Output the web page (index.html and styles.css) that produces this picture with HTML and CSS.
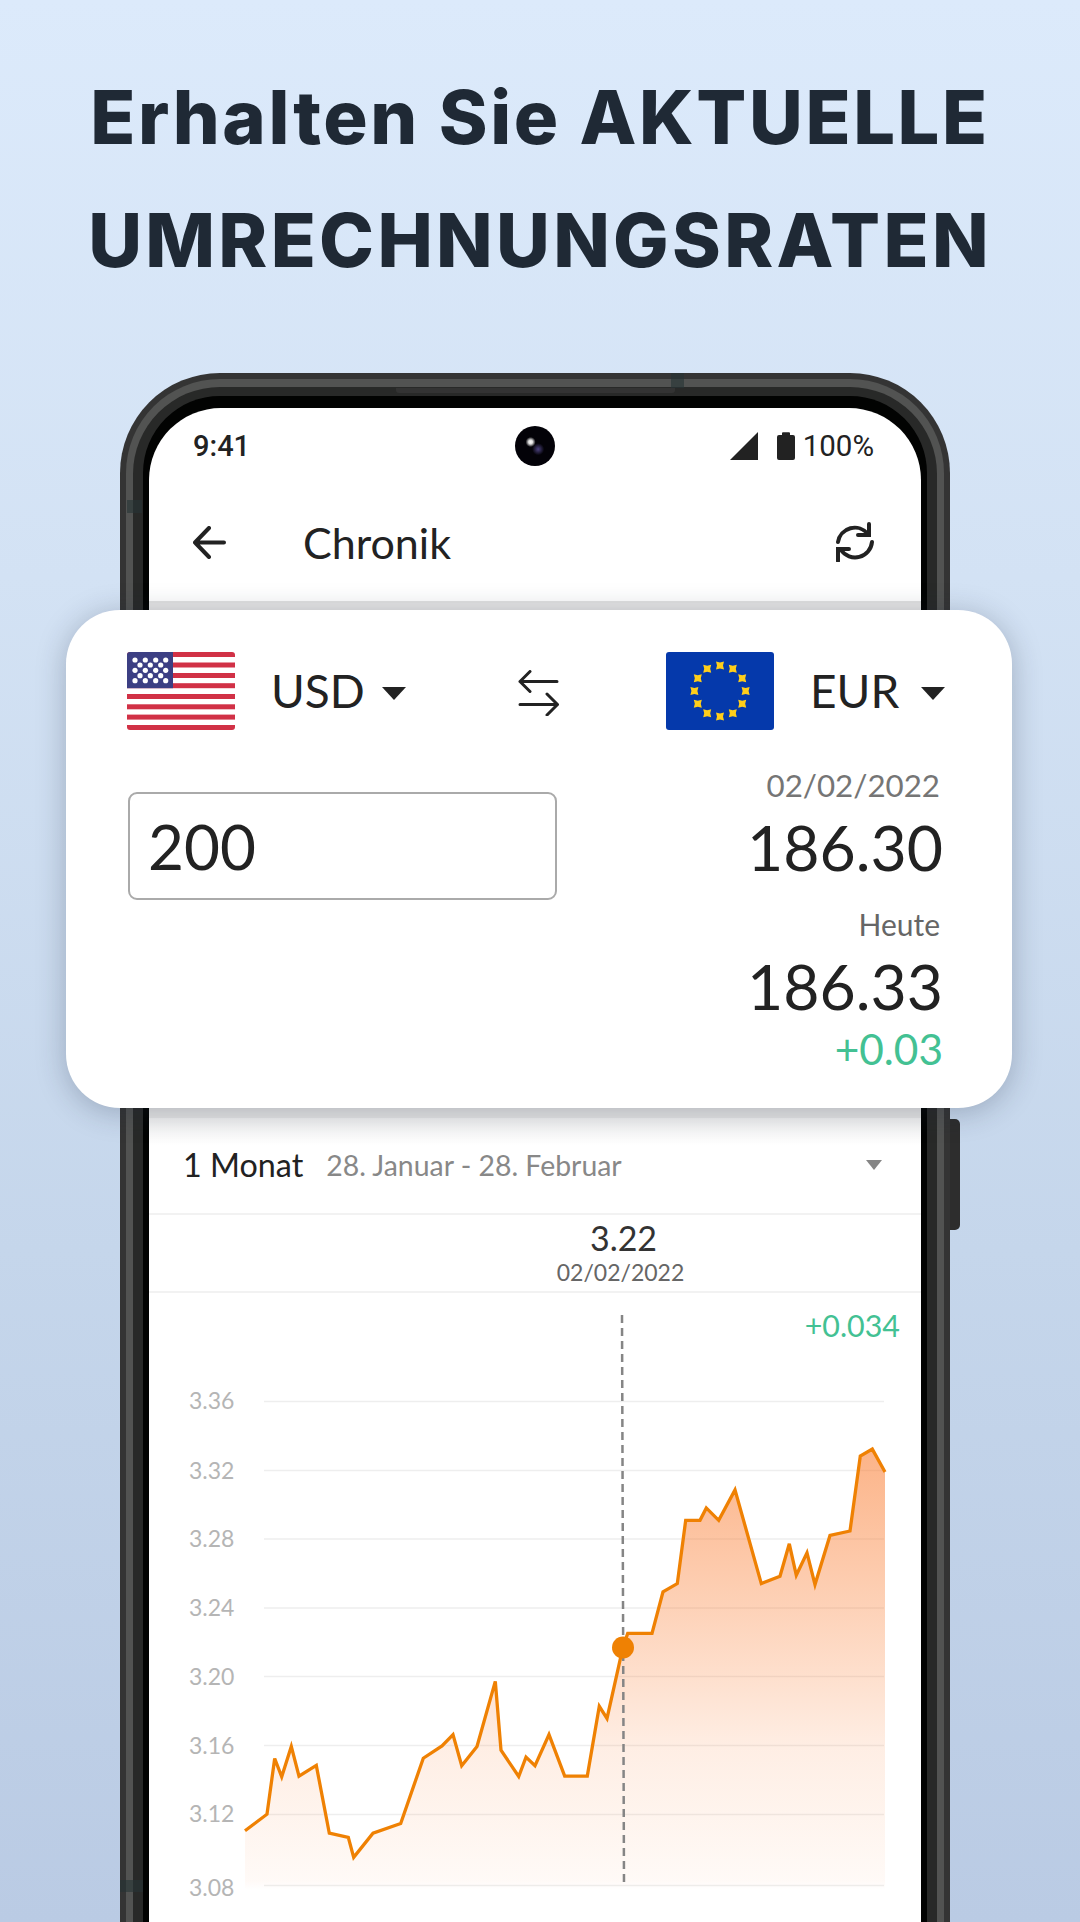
FILE: index.html
```html
<!DOCTYPE html>
<html lang="de">
<head>
<meta charset="utf-8">
<title>Chronik</title>
<link rel="stylesheet" href="styles.css">
</head>
<body>
<div class="page">
  <h1 class="headline"><span class="line line-a">Erhalten Sie AKTUELLE</span><span class="line line-b">UMRECHNUNGSRATEN</span></h1>

  <div class="phone">
    <span class="mark mark-top"></span>
    <span class="mark mark-left"></span>
    <span class="mark mark-left-low"></span>
    <span class="speaker"></span>
    <span class="side-button"></span>
    <div class="band">
      <div class="inner">
        <div class="bezel">
          <div class="screen">
            <div class="status">
              <span class="time">9:41</span>
              <span class="camera"></span>
              <div class="status-right">
                <svg class="signal" viewBox="0 0 28 28"><polygon points="28,0 28,28 0,28"/></svg>
                <svg class="battery" viewBox="0 0 18 28"><path d="M5 1.2a1 1 0 0 1 1-1h6a1 1 0 0 1 1 1V3h3a2 2 0 0 1 2 2v21a2 2 0 0 1-2 2H2a2 2 0 0 1-2-2V5a2 2 0 0 1 2-2h3z"/></svg>
                <span class="percent">100%</span>
              </div>
            </div>
            <div class="appbar">
              <svg class="back" viewBox="0 0 33 33"><path d="M31 16.5H2M16 2 2 16.5 16 31"/></svg>
              <span class="title">Chronik</span>
              <svg class="refresh" viewBox="0 0 40 40"><path d="M3 20A17 17 0 0 1 33 12M34 2V13H23M37 20A17 17 0 0 1 6 28M3 39V27H14"/></svg>
            </div>
            <div class="under-card"></div>
            <div class="period">
              <span class="period-name">1 Monat</span>
              <span class="period-range">28. Januar - 28. Februar</span>
              <span class="period-caret"></span>
            </div>
            <div class="point">
              <span class="point-value">3.22</span>
              <span class="point-date">02/02/2022</span>
            </div>
            <svg class="chart" viewBox="149 1293 773 760">
              <defs>
                <linearGradient id="area" x1="0" y1="1450" x2="0" y2="1890" gradientUnits="userSpaceOnUse">
                  <stop offset="0" stop-color="#fa7d32" stop-opacity=".58"/>
                  <stop offset=".34" stop-color="#fa7d32" stop-opacity=".36"/>
                  <stop offset=".68" stop-color="#fa7d32" stop-opacity=".13"/>
                  <stop offset=".98" stop-color="#fa7d32" stop-opacity=".04"/>
                  <stop offset="1" stop-color="#fa7d32" stop-opacity="0"/>
                </linearGradient>
              </defs>
              <g class="grid">
                <line x1="264" x2="884" y1="1401.5" y2="1401.5"/>
                <line x1="264" x2="884" y1="1470.5" y2="1470.5"/>
                <line x1="264" x2="884" y1="1539" y2="1539"/>
                <line x1="264" x2="884" y1="1608" y2="1608"/>
                <line x1="264" x2="884" y1="1676.5" y2="1676.5"/>
                <line x1="264" x2="884" y1="1745.5" y2="1745.5"/>
                <line x1="264" x2="884" y1="1814.5" y2="1814.5"/>
                <line x1="264" x2="884" y1="1885.5" y2="1885.5"/>
              </g>
              <g class="axis">
                <text x="189" y="1409">3.36</text>
                <text x="189" y="1479">3.32</text>
                <text x="189" y="1547">3.28</text>
                <text x="189" y="1616">3.24</text>
                <text x="189" y="1685">3.20</text>
                <text x="189" y="1754">3.16</text>
                <text x="189" y="1822">3.12</text>
                <text x="189" y="1896">3.08</text>
              </g>
              <text class="delta-small" x="900" y="1337">+0.034</text>
              <polygon class="area" points="245,1890 245,1830.7 267,1814.2 274.7,1758.5 281.7,1776.8 291.3,1746.4 299,1776.1 316.3,1765.4 329.3,1833.2 348.3,1837.3 353.7,1857.4 373,1833.2 400.7,1823.5 423.3,1758.2 442,1746 453,1734.6 461.7,1765.8 477,1746.4 495.3,1681.4 501,1750.2 518.7,1776.5 526,1757.1 535,1765.8 549,1734.6 564.7,1776.1 587.3,1776.1 599.3,1706.3 607,1718.4 623,1647 627.7,1633.4 652,1633.4 663,1591.9 677.3,1583.6 685.7,1520.3 700,1520.3 706.3,1507.9 718.7,1520.3 735,1489.9 761.3,1583.6 780,1576.3 789.3,1543.8 796.3,1575.3 807,1552.8 815,1584.6 830,1535.5 850,1531 860.3,1456 872.3,1449.1 885,1472 885,1890"/>
              <line class="cursor" x1="622" y1="1315" x2="624" y2="1885"/>
              <polyline class="trend" points="245,1830.7 267,1814.2 274.7,1758.5 281.7,1776.8 291.3,1746.4 299,1776.1 316.3,1765.4 329.3,1833.2 348.3,1837.3 353.7,1857.4 373,1833.2 400.7,1823.5 423.3,1758.2 442,1746 453,1734.6 461.7,1765.8 477,1746.4 495.3,1681.4 501,1750.2 518.7,1776.5 526,1757.1 535,1765.8 549,1734.6 564.7,1776.1 587.3,1776.1 599.3,1706.3 607,1718.4 623,1647 627.7,1633.4 652,1633.4 663,1591.9 677.3,1583.6 685.7,1520.3 700,1520.3 706.3,1507.9 718.7,1520.3 735,1489.9 761.3,1583.6 780,1576.3 789.3,1543.8 796.3,1575.3 807,1552.8 815,1584.6 830,1535.5 850,1531 860.3,1456 872.3,1449.1 885,1472"/>
              <circle class="dot" cx="623" cy="1647.500" r="11"/>
            </svg>
          </div>
        </div>
      </div>
    </div>
  </div>

  <section class="card">
    <div class="pairs">
      <div class="currency">
        <svg class="flag" viewBox="0 0 108 78">
          <rect width="108" height="78" fill="#fff"/>
          <g fill="#d13146">
            <rect y="0" width="108" height="5"/>
            <rect y="10.5" width="108" height="5"/>
            <rect y="21" width="108" height="5"/>
            <rect y="31.2" width="108" height="5"/>
            <rect y="42" width="108" height="5"/>
            <rect y="52.3" width="108" height="5"/>
            <rect y="62.6" width="108" height="5"/>
            <rect y="73" width="108" height="5"/>
          </g>
          <rect width="46" height="36.2" fill="#3c3f83"/>
          <g fill="#fff">
            <circle cx="8" cy="8" r="2.6"/><circle cx="18.3" cy="8" r="2.6"/><circle cx="28.7" cy="8" r="2.6"/><circle cx="38.7" cy="8" r="2.6"/>
            <circle cx="13" cy="13" r="2.6"/><circle cx="23.3" cy="13" r="2.6"/><circle cx="33.7" cy="13" r="2.6"/>
            <circle cx="8" cy="18.3" r="2.6"/><circle cx="18.3" cy="18.3" r="2.6"/><circle cx="28.7" cy="18.3" r="2.6"/><circle cx="38.7" cy="18.3" r="2.6"/>
            <circle cx="13" cy="23.7" r="2.6"/><circle cx="23.3" cy="23.7" r="2.6"/><circle cx="33.7" cy="23.7" r="2.6"/>
            <circle cx="8" cy="28.7" r="2.6"/><circle cx="18.3" cy="28.7" r="2.6"/><circle cx="28.7" cy="28.7" r="2.6"/><circle cx="38.7" cy="28.7" r="2.6"/>
          </g>
        </svg>
        <span class="code">USD</span>
        <span class="caret"></span>
      </div>
      <svg class="swap" viewBox="0 0 42 46"><path d="M39 11.5H2M12 1.500 2 11.5l10 10M2 34.500H39.500M29 24l10.500 10.500L29 45"/></svg>
      <div class="currency">
        <svg class="flag" viewBox="0 0 108 78">
          <defs><path id="eu-star" d="M-4-4 0-3 4-4 3 0 4 4 0 3-4 4-3 0Z" fill="#ffce1a"/></defs>
          <rect width="108" height="78" fill="#0539ab"/>
          <use href="#eu-star" x="54" y="13.4"/><use href="#eu-star" x="66.8" y="16.8"/><use href="#eu-star" x="76.200" y="26.200"/><use href="#eu-star" x="79.600" y="39"/>
          <use href="#eu-star" x="76.200" y="51.800"/><use href="#eu-star" x="66.8" y="61.2"/><use href="#eu-star" x="54" y="64.6"/><use href="#eu-star" x="41.2" y="61.2"/>
          <use href="#eu-star" x="31.8" y="51.8"/><use href="#eu-star" x="28.4" y="39"/><use href="#eu-star" x="31.8" y="26.2"/><use href="#eu-star" x="41.2" y="16.8"/>
        </svg>
        <span class="code">EUR</span>
        <span class="caret"></span>
      </div>
    </div>
    <div class="convert">
      <div class="amount">200</div>
      <div class="results">
        <span class="result-label">02/02/2022</span>
        <span class="result-value">186.30</span>
        <span class="result-label result-gap">Heute</span>
        <span class="result-value">186.33</span>
        <span class="delta">+0.03</span>
      </div>
    </div>
  </section>
</div>
</body>
</html>
```

FILE: styles.css
```css
* { box-sizing: border-box; }
html, body { margin: 0; padding: 0; }
body { font-family: "Lato", "Open Sans", sans-serif; color: #222; }

.page {
  position: relative;
  width: 1080px;
  height: 1922px;
  overflow: hidden;
  background: linear-gradient(180deg, #dceafb 0%, #d3e2f4 30%, #c5d6eb 65%, #bacbe4 100%);
}

.headline {
  margin: 0;
  padding-top: 56px;
  text-align: center;
  font-family: "Inter", "Liberation Sans", sans-serif;
  font-weight: 800;
  font-size: 74px;
  line-height: 122.500px;
  color: #1f2935;
}
.line { display: block; white-space: nowrap; }
.line-a { letter-spacing: 2.600px; }
.line-b { letter-spacing: 3.300px; }

/* phone frame */
.phone {
  position: relative;
  width: 830px;
  margin: 72px 0 0 120px;
  padding: 6px;
  background: #343434;
  border-radius: 100px;
}
.band { padding: 8px 7px 7px; background: #525352; border-radius: 94px; }
.inner { padding: 9px 10px 10px; background: #282928; border-radius: 87px; }
.bezel { padding: 12px 6px 6px; background: #020302; border-radius: 77px; }
.screen { background: #fff; border-radius: 72px 72px 0 0; overflow: hidden; }

.mark { position: absolute; background: rgba(38, 52, 54, .6); }
.mark-top { left: 551px; top: 0; width: 13px; height: 15px; }
.mark-left { left: 7px; top: 127px; width: 15px; height: 13px; }
.mark-left-low { left: 0; top: 1507px; width: 23px; height: 12px; }
.speaker { position: absolute; left: 276px; top: 15px; width: 279px; height: 5px; background: #333; border-radius: 0 0 3px 3px; }
.side-button { position: absolute; left: 830px; top: 746px; width: 10px; height: 111px; background: #2d2d2d; border-radius: 0 5px 5px 0; }

/* status bar */
.status {
  display: grid;
  grid-template-columns: 1fr auto 1fr;
  align-items: center;
  height: 75px;
  padding: 0 44px;
  font-family: "Roboto", sans-serif;
  font-size: 29px;
  font-weight: 500;
  color: #222;
}
.camera {
  width: 40px;
  height: 40px;
  border-radius: 50%;
  background:
    radial-gradient(circle at 39% 40%, #fff 0, #ddd 2px, rgba(0,0,0,0) 5px),
    radial-gradient(circle at 58% 58%, #4d4380 0, rgba(0,0,0,0) 6px),
    #030208;
}
.status-right { display: flex; align-items: center; justify-content: flex-end; margin-right: 3px; }
.signal { width: 28px; height: 28px; fill: #222; margin-right: 19px; }
.battery { width: 18px; height: 28px; fill: #222; margin-right: 8px; }
.percent { font-weight: 400; font-size: 29.500px; }

/* app bar */
.appbar {
  display: flex;
  align-items: center;
  height: 120px;
  padding: 0 46px 0 44px;
  border-bottom: 2px solid #e2e2e2;
}
.back { width: 33px; height: 33px; fill: none; stroke: #222; stroke-width: 4; stroke-linecap: round; stroke-linejoin: round; }
.title { margin-left: 77px; font-size: 43px; color: #222; flex: 1; }
.refresh { width: 40px; height: 40px; fill: none; stroke: #222; stroke-width: 4; stroke-linecap: round; stroke-linejoin: miter; }

.under-card { height: 515px; background: #e6e6e6; }

/* period row */
.period {
  display: flex;
  align-items: center;
  height: 97px;
  padding: 0 39px 2px 34px;
  border-bottom: 2px solid #f2f2f2;
  background: linear-gradient(180deg, #f1f1f1 0, #fff 28px);
}
.period-name { font-size: 32.300px; color: #222; }
.period-range { margin-left: 23px; font-size: 28.400px; color: #888; flex: 1; }
.period-caret { width: 0; height: 0; border-left: 8.500px solid transparent; border-right: 8.500px solid transparent; border-top: 10px solid #858585; }

/* selected point */
.point {
  display: flex;
  flex-direction: column;
  align-items: center;
  height: 78px;
  padding-left: 171px;
  border-bottom: 2px solid #f2f2f2;
}
.point-value { font-size: 34px; line-height: 45px; color: #333; margin-left: 6px; }
.point-date { font-size: 23px; line-height: 24px; color: #666; }

/* chart */
.chart { display: block; width: 773px; height: 760px; }
.grid line { stroke: #eeeeee; stroke-width: 1.500; }
.axis text { font-family: "Lato", sans-serif; font-size: 23px; fill: #b5b5b5; }
.delta-small { font-family: "Lato", sans-serif; font-size: 30.400px; fill: #43c193; text-anchor: end; }
.area { fill: url(#area); }
.cursor { stroke: #858585; stroke-width: 2.500; stroke-dasharray: 8 5; }
.trend { fill: none; stroke: #ef8103; stroke-width: 3.300; stroke-linejoin: miter; }
.dot { fill: #ef8103; }

/* floating converter card */
.card {
  position: absolute;
  left: 66px;
  top: 610px;
  width: 946px;
  height: 498px;
  padding: 41px 67px 0 61px;
  background: #fff;
  border-radius: 54px;
  box-shadow: 0 4px 30px rgba(30, 40, 60, .28);
}
.pairs { display: flex; align-items: center; justify-content: space-between; }
.currency { display: flex; align-items: center; }
.flag { width: 108px; height: 78px; border-radius: 3px; display: block; }
.code { margin-left: 36px; width: 111px; padding-top: 1px; font-size: 46px; line-height: 78px; color: #222; }
.caret { margin-top: 5px; width: 0; height: 0; border-left: 12px solid transparent; border-right: 12px solid transparent; border-top: 13px solid #222; }
.swap { width: 42px; height: 46px; margin: 4px 0 0 5px; fill: none; stroke: #222; stroke-width: 3; stroke-linecap: round; stroke-linejoin: round; }

.convert { display: flex; justify-content: space-between; align-items: flex-start; margin-top: 36px; }
.amount {
  width: 429px;
  height: 108px;
  margin-top: 26px;
  margin-left: 1px;
  padding-left: 18px;
  border: 2px solid #aaa;
  border-radius: 9px;
  font-size: 62px;
  line-height: 104px;
  color: #222;
}
.results { display: flex; flex-direction: column; align-items: flex-end; margin-right: 2px; }
.result-label { font-size: 31.300px; line-height: 38px; color: #757575; margin-right: 3px; }
.result-value { font-size: 62.500px; line-height: 76px; margin-top: 5px; color: #222; }
.result-gap { margin-top: 20px; font-size: 30px; color: #666; }
.delta { font-size: 42.400px; line-height: 44px; margin-top: 3px; color: #43c193; }
```
